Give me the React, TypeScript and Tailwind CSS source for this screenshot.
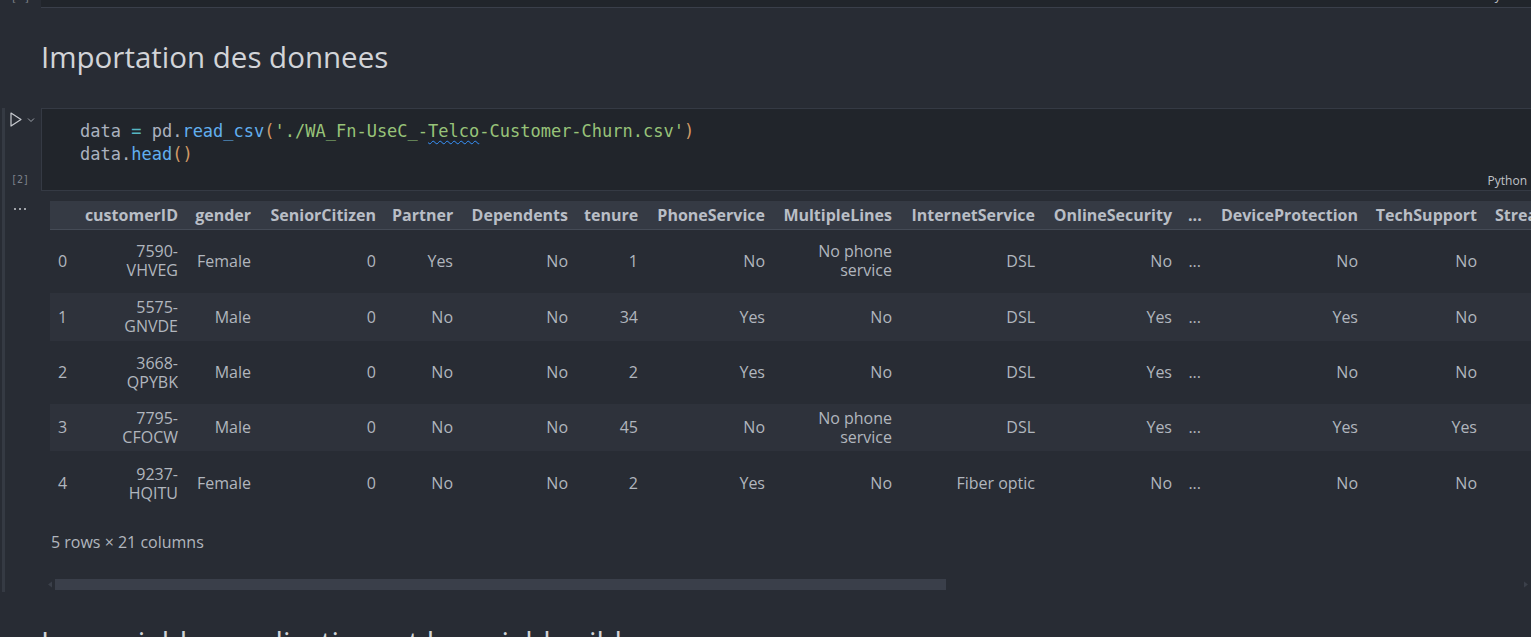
import React from 'react';

const columns = [
  { name: '', w: 'w-[26px]' },
  { name: 'customerID', w: 'w-[110px]' },
  { name: 'gender', w: 'w-[73px]' },
  { name: 'SeniorCitizen', w: 'w-[125px]' },
  { name: 'Partner', w: 'w-[77px]' },
  { name: 'Dependents', w: 'w-[115px]' },
  { name: 'tenure', w: 'w-[70px]' },
  { name: 'PhoneService', w: 'w-[127px]' },
  { name: 'MultipleLines', w: 'w-[127px]' },
  { name: 'InternetService', w: 'w-[143px]' },
  { name: 'OnlineSecurity', w: 'w-[137px]' },
  { name: '...', w: 'w-[29px]' },
  { name: 'DeviceProtection', w: 'w-[157px]' },
  { name: 'TechSupport', w: 'w-[119px]' },
  { name: 'StreamingTV', w: 'w-[120px]' },
  { name: 'StreamingMovies', w: 'w-[160px]' },
  { name: 'Contract', w: 'w-[150px]' },
  { name: 'PaperlessBilling', w: 'w-[150px]' },
  { name: 'PaymentMethod', w: 'w-[230px]' },
  { name: 'MonthlyCharges', w: 'w-[150px]' },
  { name: 'TotalCharges', w: 'w-[130px]' },
  { name: 'Churn', w: 'w-[70px]' },
];

const rows = [
  { h: 'h-[64px]', shade: false, cells: ['0', '7590-\nVHVEG', 'Female', '0', 'Yes', 'No', '1', 'No', 'No phone\nservice', 'DSL', 'No', '...', 'No', 'No', 'No', 'No', 'Month-to-month', 'Yes', 'Electronic check', '29.85', '29.85', 'No'] },
  { h: 'h-[48px]', shade: true, cells: ['1', '5575-\nGNVDE', 'Male', '0', 'No', 'No', '34', 'Yes', 'No', 'DSL', 'Yes', '...', 'Yes', 'No', 'No', 'No', 'One year', 'No', 'Mailed check', '56.95', '1889.5', 'No'] },
  { h: 'h-[63px]', shade: false, cells: ['2', '3668-\nQPYBK', 'Male', '0', 'No', 'No', '2', 'Yes', 'No', 'DSL', 'Yes', '...', 'No', 'No', 'No', 'No', 'Month-to-month', 'Yes', 'Mailed check', '53.85', '108.15', 'Yes'] },
  { h: 'h-[47px]', shade: true, cells: ['3', '7795-\nCFOCW', 'Male', '0', 'No', 'No', '45', 'No', 'No phone\nservice', 'DSL', 'Yes', '...', 'Yes', 'Yes', 'No', 'No', 'One year', 'No', 'Bank transfer (automatic)', '42.30', '1840.75', 'No'] },
  { h: 'h-[65px]', shade: false, cells: ['4', '9237-\nHQITU', 'Female', '0', 'No', 'No', '2', 'Yes', 'No', 'Fiber optic', 'No', '...', 'No', 'No', 'No', 'No', 'Month-to-month', 'Yes', 'Electronic check', '70.70', '151.65', 'Yes'] },
];

const ui = "font-['Open_Sans','Noto_Sans',sans-serif]";
const mono = "font-['DejaVu_Sans_Mono','Liberation_Mono',monospace]";

export default function App() {
  return (
    <div className={`h-[637px] overflow-hidden bg-[#282c34] text-[#b4b9c1] ${ui}`}>
      {/* tail of the previous cell */}
      <div className="flex h-[8px] overflow-hidden">
        <div className="w-[41px] flex items-end justify-center pb-[5px]">
          <span className={`${mono} text-[11px] leading-[11px] text-[#7d828b]`}>[ ]</span>
        </div>
        <div className="flex-1 bg-[#21252b] border-b border-[#3a3f4a] flex items-end justify-end pr-[4px] pb-[5px]">
          <span className="text-[12px] leading-[12px] text-[#c0c3c8]">Python</span>
        </div>
      </div>

      {/* markdown heading */}
      <div className="pl-[41px] h-[100px] flex items-center pb-[2px]">
        <h1 className="text-[29.5px] leading-[34px] text-[#d2d4d8] font-normal">Importation des donnees</h1>
      </div>

      {/* selected code cell */}
      <div className="flex">
        <div className="w-[41px] flex shrink-0">
          <div className="w-[3px] ml-[2px] h-[484px] bg-[#353a43]"></div>
          <div className="flex-1 flex flex-col">
            <div className="h-[82px] flex flex-col justify-between pt-[4px] pb-[4px]">
              <div className="flex items-center gap-[5px] pl-[5px]">
                <svg width="12" height="15" viewBox="0 0 12 15" fill="none" stroke="#c8cbd0" strokeWidth="1.2">
                  <path d="M1 1 L11 7.5 L1 14 Z" strokeLinejoin="round" />
                </svg>
                <svg width="8" height="6" viewBox="0 0 8 6" fill="none" stroke="#9da2aa" strokeWidth="1">
                  <path d="M1 1.5 L4 4.5 L7 1.5" />
                </svg>
              </div>
              <span className={`${mono} text-[10px] leading-[12px] text-[#7d828b] pl-[6px]`}>[2]</span>
            </div>
            <div className="pt-[18px] pl-[9px] flex gap-[3px]">
              <span className="w-[2px] h-[2px] bg-[#c8cbd0] rounded-full"></span>
              <span className="w-[2px] h-[2px] bg-[#c8cbd0] rounded-full"></span>
              <span className="w-[2px] h-[2px] bg-[#c8cbd0] rounded-full"></span>
            </div>
          </div>
        </div>

        <div className="flex-1 min-w-0">
          <div className="h-[83px] bg-[#21252b] border-y border-l border-[#353a44] relative">
            <pre className={`${mono} text-[17px] leading-[23px] text-[#abb2bf] pl-[38px] pt-[11px]`}>
              <span>data </span>
              <span className="text-[#56b6c2]">=</span>
              <span> pd.</span>
              <span className="text-[#61afef]">read_csv</span>
              <span className="text-[#d19a66]">(</span>
              <span className="text-[#98c379]">'./WA_Fn-UseC_-</span>
              <span className="text-[#98c379] underline decoration-wavy decoration-[#3794ff] decoration-1 underline-offset-[3px]">Telco</span>
              <span className="text-[#98c379]">-Customer-Churn.csv'</span>
              <span className="text-[#d19a66]">)</span>
              {'\n'}
              <span>data.</span>
              <span className="text-[#61afef]">head</span>
              <span className="text-[#d19a66]">()</span>
            </pre>
            <span className="absolute right-[4px] bottom-[3px] text-[12px] leading-[12px] text-[#c0c3c8]">Python</span>
          </div>

          {/* output */}
          <div className="pt-[10px] pl-[9px]">
            <div className="overflow-hidden">
              <table className="table-fixed w-[2595px] border-collapse text-[16px]">
                <colgroup>
                  {columns.map((c, i) => (
                    <col key={i} className={c.w} />
                  ))}
                </colgroup>
                <thead>
                  <tr className="h-[28px] bg-[#353a44] border-b border-[#454b56]">
                    {columns.map((c, i) => (
                      <th key={i} className="px-2 text-right font-bold text-[#b9bec6] whitespace-nowrap leading-[20px]">
                        {c.name}
                      </th>
                    ))}
                  </tr>
                </thead>
                <tbody>
                  {rows.map((r, ri) => (
                    <tr key={ri} className={`${r.h} ${r.shade ? 'bg-[#2e323b]' : ''}`}>
                      {r.cells.map((v, ci) => (
                        <td
                          key={ci}
                          className={`px-2 align-middle whitespace-pre-line leading-[19px] text-[#b1b6be] ${ci === 0 ? 'text-left' : 'text-right'} ${ci === 11 ? 'text-left' : ''}`}
                        >
                          {v}
                        </td>
                      ))}
                    </tr>
                  ))}
                </tbody>
              </table>
            </div>
            <div className="pt-[16px] pl-[1px] text-[16px] leading-[20px] text-[#b1b6be]">5 rows × 21 columns</div>

            {/* horizontal scrollbar */}
            <div className="mt-[27px] flex items-center h-[11px] -ml-[5px]">
              <svg width="10" height="11" viewBox="0 0 10 11">
                <path d="M3 5.5 L7 2.5 L7 8.5 Z" fill="#3b404a" />
              </svg>
              <div className="flex-1 h-[11px] relative">
                <div className="absolute left-0 top-0 h-[11px] w-[891px] bg-[#3a3f4a]"></div>
              </div>
              <svg width="10" height="11" viewBox="0 0 10 11">
                <path d="M3 2.5 L7 5.5 L3 8.5 Z" fill="#3b404a" />
              </svg>
            </div>
          </div>
        </div>
      </div>

      {/* next heading, cut off */}
      <div className="pl-[41px] pt-[33px]">
        <h1 className="text-[29.5px] leading-[34px] text-[#d2d4d8] font-normal whitespace-nowrap">Les variables explicatives et la variable cible</h1>
      </div>
    </div>
  );
}
